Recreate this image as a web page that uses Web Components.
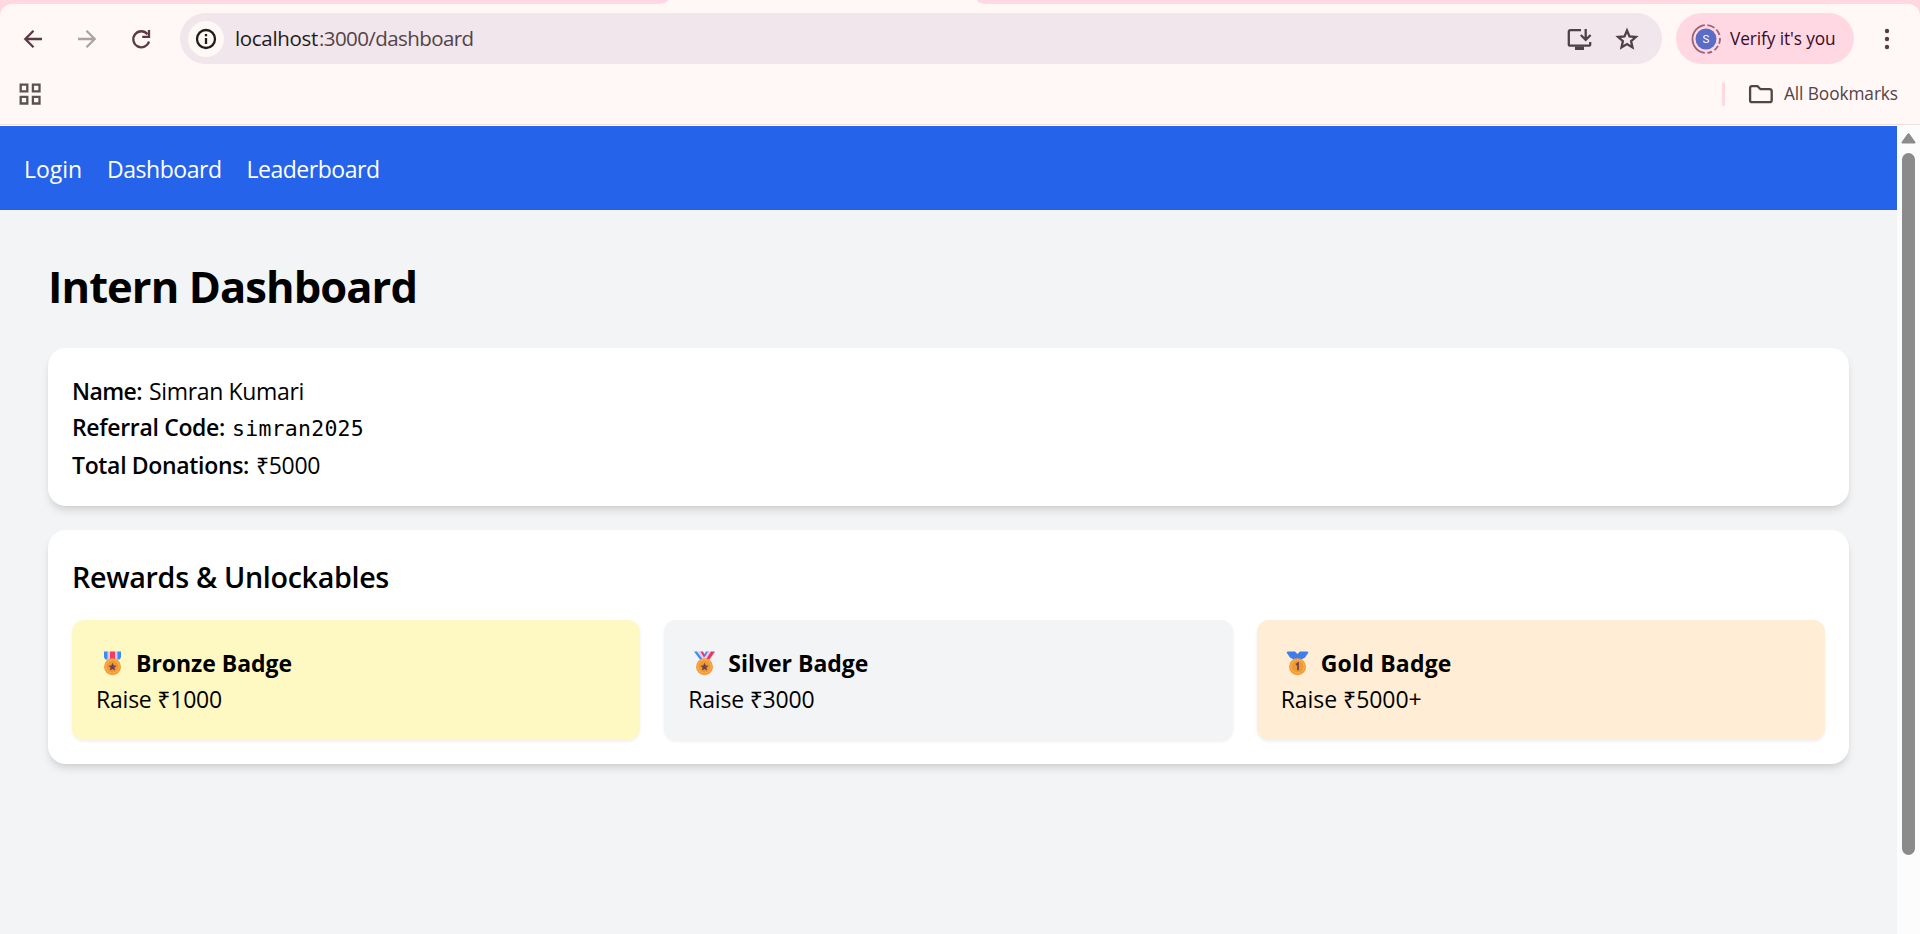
<!DOCTYPE html>
<html lang="en">
<head>
<meta charset="utf-8">
<title>Intern Dashboard</title>
<style>
html,body{margin:0;height:100%;overflow:hidden}
body{font-family:"Open Sans","Noto Sans",sans-serif;color:#000;background:#f3f4f6}
</style>
</head>
<body>
<app-window></app-window>
<script>
const define=(name,html,after)=>customElements.define(name,class extends HTMLElement{
  connectedCallback(){
    if(this.shadowRoot)return;
    const t=document.createElement('template');
    t.innerHTML=html;
    this.attachShadow({mode:'open'}).append(t.content.cloneNode(true));
    if(after)after(this,this.shadowRoot);
  }
});

/* A run of text tracked so that it fills the width in its "w" attribute. */
define('fit-text',`<style>:host{display:inline-block;white-space:pre}span{display:inline-block}</style><span><slot></slot></span>`,(el,root)=>{
  const w=+el.getAttribute('w'),s=root.querySelector('span');
  const n=[...el.textContent].length;
  s.style.letterSpacing=(w-1-s.getBoundingClientRect().width)/n+'px';
  el.style.width=w+'px';
});

/* Medal pictograms: ribbon shape depends on "kind". */
const medals={
  military:`<path fill="#3a8df0" d="M0 0h4v8H1.500Q0 7 0 5zM13 0h4v5q0 2-1.500 3H13z"/><path fill="#d9c8f4" d="M3.500 0H6v8H3.500zM11 0h2.500v8H11z"/><path fill="#f23c62" d="M6 0h5v8H6z"/>`,
  sports:`<path fill="#3a8df0" d="M-2 0h3l6 8H4zM13 0h-3L7.500 4 9 6z"/><path fill="#e3c8f7" d="M1 0h4l4.500 8H7zM16 0h-4L8 7h3z"/><path fill="#f5325f" d="M4.500 0h2.500l2 4-1 2zM19 0h-4l-5 8h3.500z"/>`,
  first:`<path fill="#3e7eea" d="M-1 0h7l2.500 2.500L11 0h7q2 0 .8 2L16 6l-3.500 2h-8L1 6-1.800 2Q-3 0-1 0z"/>`
};
define('medal-icon',`<style>:host{display:block;width:40px;height:36px}svg{display:block;overflow:visible}</style><svg width="40" height="36"></svg>`,(el,root)=>{
  const k=el.getAttribute('kind');
  const mark=k==='first'?'<path d="M7 13.300l2-1.500v7" fill="none" stroke="#6c3f51" stroke-width="1.700"/>'
    :'<path fill="#70404f" d="M8.500 11.300l1.200 2.600 2.900.3-2.200 1.900.7 2.900-2.600-1.500L5.900 19l.7-2.900-2.200-1.900 2.900-.3z"/>';
  root.querySelector('svg').innerHTML=`<g transform="translate(8 7.500)">${medals[k]}<circle cx="8.500" cy="15.300" r="8.500" fill="#f59a3c"/><circle cx="8.500" cy="15" r="6.600" fill="#ee9a33" stroke="#fbae48" stroke-width="1.200"/>${mark}</g>`;
});

define('browser-tabs',`<style>
:host{display:flex;justify-content:space-between;height:4px;background:#fff8f7}
div{background:#ffd8e4;height:4px}
.a{width:668px;border-radius:0 0 10px 0/0 0 4px 0}.b{width:943px;border-radius:0 0 0 10px/0 0 0 4px}
</style><div class="a"></div><div class="b"></div>`);

define('browser-toolbar',`<style>
:host{display:block;background:#ffd8e4}
.bar{background:#fff8f7;border-radius:12px 12px 0 0;height:120px;border-bottom:1px solid #f1dde3}
svg{display:block;flex:none;overflow:visible;fill:none;stroke-width:2.300}
.row{display:flex;align-items:center;height:51px;padding-top:9px}
.nav{display:flex;flex:none;gap:30px;padding-left:21px;width:180px;box-sizing:border-box}
.omni{display:flex;flex:none;align-items:center;width:1482px;height:51px;border-radius:26px;background:#f0e6eb;box-sizing:border-box;padding:0 23px 0 8px;font-size:20.500px;color:#544347}
.omni fit-text{margin-bottom:2px}
.omni b{font-weight:400;color:#1f1a1c}
.info{width:36px;height:36px;border-radius:50%;background:#fff8f7;margin-right:11px}
.sp{flex:1}
.chip{display:flex;flex:none;align-items:center;width:178px;height:51px;border-radius:26px;background:#ffd8e4;margin-left:14px;box-sizing:border-box;padding-left:14px;color:#3b0a25;font-size:17.300px}
.chip fit-text{margin-left:8px}
.marks{display:flex;align-items:center;height:51px;padding:4px 21px 0 19px;font-size:17.300px;color:#544347}
.sep{width:3px;height:24px;border-radius:2px;background:#ffd8e4;margin-right:24px}
.marks fit-text{margin-left:11px}
</style>
<div class="bar">
 <div class="row">
  <div class="nav">
   <svg width="24" height="24" stroke="#5b3a46"><path d="M21 12H5M12.500 3.800L4.300 12l8.200 8.200"/></svg>
   <svg width="24" height="24" stroke="#aaa3a3"><path d="M3 12h16M11.500 3.800l8.200 8.200-8.200 8.200"/></svg>
   <svg width="24" height="24" stroke="#5b3a46"><path d="M20 14.500A8 8 0 1 1 18.500 7.200M20 3v6.800h-6.800"/></svg>
  </div>
  <div class="omni">
   <svg class="info" width="36" height="36" stroke="#1f1a1c"><circle cx="18" cy="18" r="9"/><path d="M18 17v6M18 13v2.200"/></svg>
   <fit-text w="84"><b>localhost</b></fit-text><fit-text w="155.500">:3000/dashboard</fit-text>
   <div class="sp"></div>
   <svg width="26" height="24"><path stroke="#4f4145" d="M15 3.200H4.500Q2.800 3.200 2.800 5v12.200q0 1.500 1.700 1.500h18q1.700 0 1.700-1.500V15M19.700 2v10M14.800 8l4.900 4.800L24.600 8"/><path d="M9 19.500h9v3.500H9z" fill="#4f4145"/></svg>
   <svg style="margin-left:23px" width="24" height="24" stroke="#4f4145"><path d="M12 3.500l2.500 5.900 6.400.6-4.800 4.200 1.400 6.200L12 17.100l-5.500 3.300 1.400-6.200L3.100 10l6.400-.6z"/></svg>
  </div>
  <div class="chip">
   <svg width="32" height="32"><circle cx="16" cy="16" r="10.500" fill="#5a6cc4"/><path d="M14.800 2.100A14 14 0 0 0 14.800 29.900" stroke="#98637b" style="stroke-width:1.800"/><path d="M17.400 2.100A14 14 0 0 1 24.500 4.900M26.300 6.500A14 14 0 0 1 29.500 12M30 15A14 14 0 0 1 29.100 20.800M28 22.900A14 14 0 0 1 24.500 27.100M22 28.600A14 14 0 0 1 17.400 29.900" stroke="#98637b" style="stroke-width:1.800"/><text x="16" y="20" text-anchor="middle" fill="#fff" font-family="Roboto,sans-serif" font-size="11.500">S</text></svg>
   <fit-text w="106.500">Verify it's you</fit-text>
  </div>
  <svg style="margin-left:21px" width="24" height="24"><g fill="#5b3a46"><circle cx="12" cy="4" r="2.200"/><circle cx="12" cy="12" r="2.200"/><circle cx="12" cy="20" r="2.200"/></g></svg>
 </div>
 <div class="marks">
  <svg width="23" height="23" style="margin-top:2px" stroke="#5c5052"><path d="M1.700 1.700h6.600v6.600H1.700zM13.900 1.700h6.600v6.600h-6.600zM1.700 13.900h6.600v6.600H1.700zM13.900 13.900h6.600v6.600h-6.600z"/></svg>
  <div class="sp"></div><div class="sep"></div>
  <svg width="24" height="20" stroke="#544347"><path d="M3 2.200h5.500l3 3h9q2.200 0 2.200 2v9q0 2-2.200 2H3q-1.900 0-1.900-2V4q0-1.800 1.900-1.800z"/></svg>
  <fit-text w="115">All Bookmarks</fit-text>
 </div>
</div>`);

define('nav-bar',`<style>
:host{display:flex;gap:24px;height:84px;box-sizing:border-box;padding:25px 24px 0;background:#2563eb;color:#fff;font-size:23px;line-height:36px}
</style><fit-text w="59">Login</fit-text><fit-text w="115.500">Dashboard</fit-text><fit-text w="134">Leaderboard</fit-text>`);

define('panel-card',`<style>
:host{display:block;background:#fff;border-radius:18px;padding:24px;margin-bottom:24px;box-sizing:border-box;box-shadow:0 6px 9px -1.500px rgba(0,0,0,.1),0 3px 6px -3px rgba(0,0,0,.1)}
</style><slot></slot>`);

define('info-row',`<style>
:host{display:flex;align-items:baseline;height:36px;line-height:38px;font-size:23px}
::slotted([slot=label]){font-weight:600}
div{width:6px}
</style><slot name="label"></slot><div></div><slot></slot>`);

define('reward-badge',`<style>
:host{display:block;height:120px;box-sizing:border-box;padding:24px;border-radius:12px;background:var(--tone);box-shadow:0 1.500px 3px rgba(0,0,0,.06);font-size:23px;line-height:38px}
.t{display:flex;height:36px;font-weight:700}
</style><div class="t"><medal-icon></medal-icon><slot name="title"></slot></div><slot></slot>`,(el,root)=>{
  const m=document.createElement('medal-icon');
  m.setAttribute('kind',el.getAttribute('kind'));
  root.querySelector('medal-icon').replaceWith(m);
});

define('intern-dashboard',`<style>
:host{display:block;padding:48px;box-sizing:border-box}
h1{margin:0 0 36px;height:54px;line-height:58px;font-size:43.500px;font-weight:700}
h2{margin:0 0 24px;height:42px;line-height:45px;font-size:28.700px;font-weight:600}
.grid{display:grid;grid-template-columns:repeat(3,1fr);gap:24px}
.mono{font-family:"DejaVu Sans Mono",monospace;font-size:21.500px}
</style>
<h1><fit-text w="370">Intern Dashboard</fit-text></h1>
<panel-card style="height:158px">
 <info-row><fit-text slot="label" w="71">Name:</fit-text><fit-text w="156">Simran Kumari</fit-text></info-row>
 <info-row style="height:38px"><fit-text slot="label" w="154">Referral Code:</fit-text><fit-text w="133" class="mono">simran2025</fit-text></info-row>
 <info-row><fit-text slot="label" w="178">Total Donations:</fit-text><fit-text w="65">₹5000</fit-text></info-row>
</panel-card>
<panel-card style="height:234px">
 <h2><fit-text w="318">Rewards &amp; Unlockables</fit-text></h2>
 <div class="grid">
  <reward-badge kind="military" style="--tone:#fef9c3"><fit-text slot="title" w="157">Bronze Badge</fit-text><fit-text w="127">Raise ₹1000</fit-text></reward-badge>
  <reward-badge kind="sports" style="--tone:#f3f4f6"><fit-text slot="title" w="141">Silver Badge</fit-text><fit-text w="127">Raise ₹3000</fit-text></reward-badge>
  <reward-badge kind="first" style="--tone:#ffedd5"><fit-text slot="title" w="132">Gold Badge</fit-text><fit-text w="142">Raise ₹5000+</fit-text></reward-badge>
 </div>
</panel-card>`);

define('scroll-bar',`<style>
:host{display:block;width:23px;background:#fcfcfc;box-sizing:border-box;padding:7px 5px 0}
svg{display:block;margin-left:-1px}
div{width:13px;height:702px;margin-top:9px;border-radius:7px;background:#8b8b8b}
</style><svg width="15" height="11"><path d="M7.500 1.200L13.500 9.500H1.500z" fill="#8b8b8b" stroke="#8b8b8b" stroke-width="2" stroke-linejoin="round"/></svg><div></div>`);

define('app-window',`<style>
:host{display:flex;flex-direction:column;width:1920px;height:934px;background:#fff;overflow:hidden}
.view{display:grid;grid-template-columns:1897px 23px;flex:1;margin-top:1px;min-height:0}
main{background:#f3f4f6}
</style><browser-tabs></browser-tabs><browser-toolbar></browser-toolbar>
<div class="view"><main><nav-bar></nav-bar><intern-dashboard></intern-dashboard></main><scroll-bar></scroll-bar></div>`);
</script>
</body>
</html>
